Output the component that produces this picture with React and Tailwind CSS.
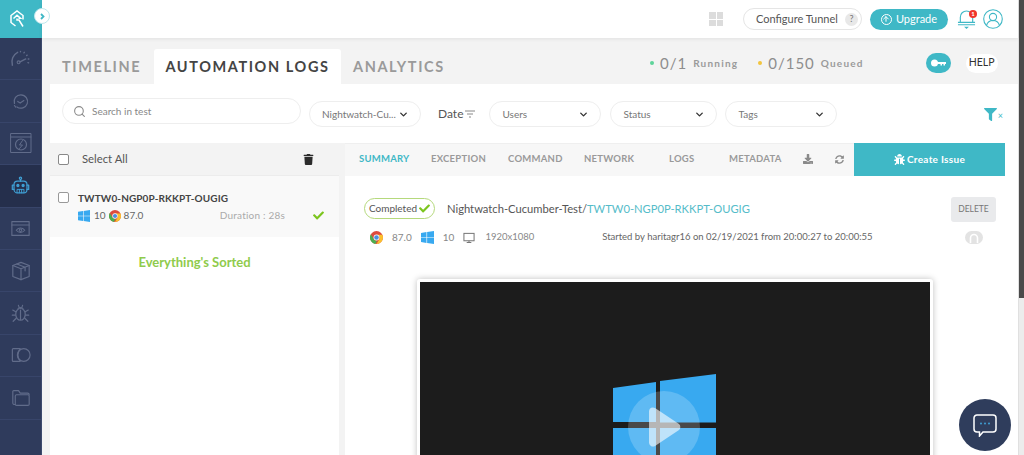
import React from "react";
import { Search, ChevronDown, ArrowUp } from "lucide-react";
import { FaTrash, FaCheck, FaDownload, FaSyncAlt, FaBug, FaFilter } from "react-icons/fa";

function Win({ size = 14, className = "" }) {
  return (
    <svg width={size} height={size} viewBox="0 0 14 14" className={className}>
      <path fill="#38a9f0" d="M0 2.1 5.9 1.2V6.6H0ZM6.6 1.1 14 0V6.6H6.6ZM0 7.4H5.9V12.8L0 11.9ZM6.6 7.4H14V14L6.6 12.9Z" />
    </svg>
  );
}

function Chrome({ size = 14, className = "" }) {
  return (
    <svg width={size} height={size} viewBox="0 0 24 24" className={className}>
      <circle cx="12" cy="12" r="12" fill="#dd4b3e" />
      <path fill="#fbc02d" d="M12 7h10.9A12 12 0 0 1 12 24l5.2-9A6 6 0 0 0 12 7Z" />
      <path fill="#4caf50" d="M1.6 6 7 15a6 6 0 0 0 6 2.9L9.8 23.8A12 12 0 0 1 1.6 6Z" />
      <circle cx="12" cy="12" r="5.4" fill="#fff" />
      <circle cx="12" cy="12" r="4.2" fill="#4a8fe0" />
    </svg>
  );
}

const stroke = "#616c8a";

function NavIcon({ children, color = stroke, size = 22 }) {
  return (
    <svg width={size} height={size} viewBox="0 0 22 22" fill="none" stroke={color} strokeWidth="1.2" strokeLinecap="round" strokeLinejoin="round">
      {children}
    </svg>
  );
}

const navIcons = [
  <NavIcon key="a" size={21}>
    <path d="M2.5 18C1 13 3 7 8 4.5" strokeWidth="1.5" />
    <path d="M11 3.5v.5M15 4.5l-.4.6M18 7.5l-.6.4M19.8 11.5h-.7M19.5 15.5l-.7-.2" strokeWidth="1.4" />
    <circle cx="9" cy="15" r="1.5" />
    <path d="M10.5 14.5 16.5 11.5" strokeWidth="1.5" />
  </NavIcon>,
  <NavIcon key="b" size={18}>
    <path d="M3 14A8.2 8.2 0 1 1 6 18.2" strokeWidth="1.5" />
    <path d="M3 16.5 4.5 18.5M7 11.5 10 13.5 14.5 10.5" strokeWidth="1.4" />
  </NavIcon>,
  <NavIcon key="c" size={22}>
    <rect x="1" y="1.5" width="20" height="19" strokeWidth="1" />
    <path d="M1 5h20" strokeWidth="1" />
    <circle cx="11" cy="12.5" r="5.5" strokeWidth="1.2" />
    <path d="M12.5 8.5 9.5 13h3L9.5 16.5" strokeWidth="1" />
  </NavIcon>,
  <NavIcon key="d" color="#3f9fd4" size={19}>
    <circle cx="11" cy="2.5" r="1.3" strokeWidth="1.4" />
    <path d="M11 4v2" strokeWidth="1.4" />
    <rect x="3.5" y="6" width="15" height="13.5" rx="4" strokeWidth="1.4" />
    <path d="M3.5 10.5H1.5v5h2M18.5 10.5h2v5h-2" strokeWidth="1.4" />
    <circle cx="8" cy="11" r="1.3" fill="#3f9fd4" />
    <circle cx="14" cy="11" r="1.3" fill="#3f9fd4" />
    <path d="M7 19.5v-4h8v4M9.7 15.5v4M12.3 15.5v4" strokeWidth="1.1" />
  </NavIcon>,
  <NavIcon key="e" size={19}>
    <rect x="1" y="3" width="20" height="16" strokeWidth="1.3" />
    <path d="M1 7h20" strokeWidth="1.3" />
    <path d="M6 13c3-3.5 7-3.5 10 0-3 3.5-7 3.5-10 0Z" />
    <circle cx="11" cy="13" r="1.5" />
  </NavIcon>,
  <NavIcon key="f" size={20}>
    <path d="M11 1.5 20 5v12l-9 3.5L2 17V5Z" strokeWidth="1.3" />
    <path d="M2 5l9 3.5L20 5M11 8.5v12M6.5 3.3l9 3.5v4" strokeWidth="1.3" />
  </NavIcon>,
  <NavIcon key="g" size={19}>
    <path d="M8.5 1.5 9.5 4M13.5 1.5 12.5 4" />
    <path d="M8 5.5c1-2 5-2 6 0" />
    <ellipse cx="11" cy="12" rx="5.5" ry="6.8" strokeWidth="1.4" />
    <path d="M11 7v11M5.5 9 2 7M16.5 9 20 7M5 13H1.5M17 13h3.5M6 16.5 2.5 20M16 16.5 19.5 20" strokeWidth="1.4" />
  </NavIcon>,
  <NavIcon key="h" size={20}>
    <path d="M10 4H2.5A1 1 0 0 0 1.5 5v12a1 1 0 0 0 1 1H10" strokeWidth="1.3" />
    <circle cx="14" cy="11" r="7" strokeWidth="1.3" />
    <path d="M10 4.5c-3 4-3 9 0 13" strokeWidth="1.3" />
  </NavIcon>,
  <NavIcon key="i" size={18}>
    <path d="M4 19H3a2 2 0 0 1-2-2V3a1 1 0 0 1 1-1h6l2 3h9a2 2 0 0 1 2 2" strokeWidth="1.4" />
    <rect x="4" y="7" width="17" height="13" rx="1.5" strokeWidth="1.4" />
  </NavIcon>,
];

function Sidebar() {
  return (
    <aside className="w-[42px] shrink-0 flex flex-col bg-[#2f3b5c] border-r border-[#3d4a6e]">
      <div className="h-[38px] bg-[#3fb8c6] flex items-center justify-center -mr-px">
        <svg width="14" height="18" viewBox="0 0 14 18" fill="none" stroke="#fff" strokeWidth="1.5" strokeLinejoin="miter" className="mr-[8px]">
          <path d="M5.5 16 1 12.5V5.5L7 1l6 4.5V9.5" />
          <path d="M3.5 8.5 7 5.2 10.5 8.2H8.5" />
          <path d="M7 8.5V10H9L13 16.5" />
        </svg>
      </div>
      {navIcons.map((icon, i) => (
        <div key={i} className={`h-[42.4px] flex items-center justify-center border-b border-[#38456a] ${i === 3 ? "bg-[#252f4c]" : ""}`}>
          {icon}
        </div>
      ))}
    </aside>
  );
}

function Header() {
  return (
    <header className="h-[38px] shrink-0 bg-white shadow-[0_1px_4px_rgba(0,0,0,0.08)] relative z-10 flex items-center justify-end pr-[15px]">
      <div className="grid grid-cols-2 gap-[1px] w-[14px] h-[14px] mr-[20px]">
        <span className="bg-[#dcdcdc]" />
        <span className="bg-[#dcdcdc]" />
        <span className="bg-[#dcdcdc]" />
        <span className="bg-[#dcdcdc]" />
      </div>
      <div className="h-[22px] w-[119px] rounded-full border border-[#e5e5e5] flex items-center pl-[12px] text-[11px] text-[#555] mr-[8px] whitespace-nowrap">
        <span>Configure Tunnel</span>
        <span className="ml-[7px] w-[13px] h-[13px] rounded-full bg-[#e8e8e8] text-[9px] text-[#777] flex items-center justify-center">?</span>
      </div>
      <div className="h-[21px] w-[78px] rounded-full bg-[#3fb8c6] flex items-center justify-center text-[11px] text-white mr-[9px]">
        <span className="w-[11px] h-[11px] rounded-full border border-white flex items-center justify-center mr-[4px]">
          <ArrowUp size={8} strokeWidth={3} />
        </span>
        Upgrade
      </div>
      <div className="relative w-[19px] h-[21px] mr-[7px]">
        <svg width="19" height="21" viewBox="0 0 20 21" fill="none" stroke="#3fb8c6" strokeWidth="1.2">
          <path d="M3.5 13V8a6.5 6.5 0 0 1 13 0v5" />
          <path d="M1 13.5h18M1 16h18" />
          <path d="M7.5 18h5L10 20.5Z" fill="#3fb8c6" stroke="none" />
        </svg>
        <span className="absolute right-[-1px] top-[1px] w-[8px] h-[8px] rounded-full bg-[#f0352b] text-white text-[6px] leading-[8px] text-center font-bold">1</span>
      </div>
      <svg width="20" height="20" viewBox="0 0 20 20" fill="none" stroke="#3fb8c6" strokeWidth="1.1">
        <circle cx="10" cy="10" r="9.3" />
        <circle cx="10" cy="8" r="3.6" />
        <path d="M3.5 16.5c1-3.5 3.5-5 6.5-5s5.5 1.5 6.5 5" />
      </svg>
    </header>
  );
}

function Stat({ dot, value, label, className = "" }) {
  return (
    <div className={`flex items-center mb-[7px] ${className}`}>
      <span className={`w-[4px] h-[4px] rounded-full ${dot} mr-[6px]`} />
      <span className="text-[15px] tracking-[1px] text-[#8d8d8d] mr-[6px]">{value}</span>
      <span className="text-[10px] font-bold tracking-[1.2px] text-[#9a9a9a] mt-[1px]">{label}</span>
    </div>
  );
}

function TabsRow() {
  return (
    <div className="h-[46px] shrink-0 flex items-end text-[14.5px] font-bold tracking-[1.6px]">
      <div className="w-[104px] h-[35px] flex items-center pl-[12px] text-[#9a9a9a]">TIMELINE</div>
      <div className="w-[187px] h-[35px] bg-white rounded-t-[3px] flex items-center justify-center text-[#444]">AUTOMATION LOGS</div>
      <div className="h-[35px] flex items-center pl-[12px] w-[309px] text-[#9a9a9a]">ANALYTICS</div>
      <div className="h-[35px] flex items-center font-normal tracking-normal">
        <Stat dot="bg-[#5ed49a]" value="0/1" label="Running" />
        <Stat dot="bg-[#f2c53d]" value="0/150" label="Queued" className="ml-[20px]" />
        <span className="ml-[62px] w-[25px] h-[20px] rounded-full bg-[#3fb8c6] flex items-center justify-center mb-[7px]">
          <svg width="15" height="8" viewBox="0 0 15 8" fill="#fff">
            <circle cx="3.5" cy="4" r="3.5" />
            <path d="M6 3h9v2h-1v1.5h-1.5V5H11v1.5H9.5V5H6Z" />
          </svg>
        </span>
        <span className="ml-[15px] w-[32px] h-[19px] rounded-full bg-white flex items-center justify-center text-[10.5px] text-[#333] mb-[7px]">HELP</span>
      </div>
    </div>
  );
}

function Select({ label, w, className = "" }) {
  return (
    <div className={`h-[26px] rounded-full border border-[#eeeeee] flex items-center justify-between pl-[12px] pr-[11px] text-[10px] text-[#777] whitespace-nowrap ${className}`} style={{ width: w }}>
      <span>{label}</span>
      <ChevronDown size={11} strokeWidth={3} color="#333" />
    </div>
  );
}

function FilterRow() {
  return (
    <div className="h-[59px] shrink-0 bg-white flex items-start pl-[12px] pr-[15px]">
      <div className="mt-[14px] w-[239px] h-[26px] rounded-full border border-[#eeeeee] flex items-center pl-[10px] text-[10px] text-[#888]">
        <Search size={13} color="#8a8a8a" className="mr-[6px]" />
        <span className="mt-[1px]">Search in test</span>
      </div>
      <Select label="Nightwatch-Cu..." w={112} className="mt-[17px] ml-[8px]" />
      <div className="mt-[17px] ml-[17px] h-[26px] flex items-center text-[12px] text-[#555]">
        Date
        <svg width="10" height="8" viewBox="0 0 10 8" stroke="#888" strokeWidth="1" className="ml-[2px]">
          <path d="M0 1h10M2 4h6M4 7h2" />
        </svg>
      </div>
      <Select label="Users" w={112} className="mt-[17px] ml-[14px]" />
      <Select label="Status" w={107} className="mt-[17px] ml-[9px]" />
      <Select label="Tags" w={112} className="mt-[17px] ml-[8px]" />
      <div className="ml-auto mt-[22px] flex items-center">
        <FaFilter size={13} color="#3fb8c6" />
        <span className="text-[9px] text-[#3fb8c6] ml-[1px] mt-[3px]">×</span>
      </div>
    </div>
  );
}

function ListColumn() {
  return (
    <div className="w-[289px] shrink-0 flex flex-col bg-white">
      <div className="h-[33px] shrink-0 bg-[#f3f3f3] border-b border-[#ececec] flex items-center pl-[8px] pr-[25px] text-[11.3px] text-[#555]">
        <span className="w-[11px] h-[11px] rounded-[2px] border border-[#888] bg-white mr-[13px]" />
        <span>Select All</span>
        <FaTrash size={11} color="#2b2b2b" className="ml-auto" />
      </div>
      <div className="h-[61px] shrink-0 bg-[#f9f9f9] flex pl-[8px] pr-[15px] pt-[15px]">
        <span className="w-[11px] h-[11px] rounded-[2px] border border-[#999] bg-white mr-[9px] mt-[1px]" />
        <div className="flex-1">
          <div className="text-[10px] font-bold tracking-[0.1px] text-[#444] leading-[14px]">TWTW0-NGP0P-RKKPT-OUGIG</div>
          <div className="flex items-center text-[10px] text-[#666] mt-[3px]">
            <Win size={12} />
            <span className="ml-[4px]">10</span>
            <Chrome size={12} className="ml-[3px]" />
            <span className="ml-[3px]">87.0</span>
            <span className="ml-auto text-[#aaa] tracking-[0.2px]">Duration : 28s</span>
            <FaCheck size={11} color="#7cc51e" className="ml-[28px]" />
          </div>
        </div>
      </div>
      <div className="pt-[16px] text-center text-[13px] font-bold text-[#8fcb4c]">Everything's Sorted</div>
    </div>
  );
}

function DetailTabs() {
  const tabs = [
    ["SUMMARY", 72, "text-[#3fb8c6]"],
    ["EXCEPTION", 77, ""],
    ["COMMAND", 76, ""],
    ["NETWORK", 85, ""],
    ["LOGS", 60, ""],
    ["METADATA", 74, ""],
  ];
  return (
    <div className="h-[33px] shrink-0 flex pr-[13px]">
      <div className="flex-1 bg-[#f7f7f7] border-t border-[#efefef] flex items-center pl-[14px] pb-[2px] text-[9.5px] font-bold tracking-[0.25px] text-[#9a9a9a]">
        {tabs.map(([t, w, c]) => (
          <span key={t} className={c} style={{ width: w }}>{t}</span>
        ))}
        <FaDownload size={10} color="#8a8a8a" />
        <FaSyncAlt size={9} color="#8a8a8a" className="ml-[22px]" />
      </div>
      <div className="w-[151px] bg-[#3fb8c6] flex items-center justify-center text-white text-[10px] font-bold tracking-[0.3px]">
        <FaBug size={11} className="mr-[2px]" />
        Create Issue
      </div>
    </div>
  );
}

function DetailPanel() {
  return (
    <div className="w-[673px] shrink-0 bg-white flex flex-col ml-[6px] overflow-hidden">
      <DetailTabs />
      <div className="flex items-start pl-[19px] pr-[22px] pt-[22px]">
        <div className="h-[21px] w-[71px] rounded-full border border-[#b5d97c] flex items-center justify-center text-[10px] text-[#555]">
          Completed
          <FaCheck size={11} color="#7cc51e" className="ml-[2px]" />
        </div>
        <div className="ml-[12px] text-[11.2px] h-[21px] mt-[1px] flex items-center text-[#555]">
          Nightwatch-Cucumber-Test/<span className="text-[#55bcc9]">TWTW0-NGP0P-RKKPT-OUGIG</span>
        </div>
        <div className="ml-auto -mt-[1px] w-[45px] h-[25px] rounded-[3px] bg-[#e9eaec] flex items-center justify-center text-[8.5px] text-[#777]">DELETE</div>
      </div>
      <div className="flex items-center pl-[25px] pr-[35px] mt-[8px] h-[16px] text-[10px] text-[#888]">
        <Chrome size={13} />
        <span className="ml-[9px]">87.0</span>
        <Win size={13} className="ml-[9px]" />
        <span className="ml-[9px]">10</span>
        <svg width="12" height="12" viewBox="0 0 13 12" fill="none" stroke="#777" strokeWidth="1.1" className="ml-[9px]">
          <rect x="1" y="1" width="11" height="8" />
          <path d="M4 11h5M6.5 9v2" />
        </svg>
        <span className="ml-[10px] text-[9.5px]">1920x1080</span>
        <span className="ml-[68px] text-[9.5px] text-[#666]">Started by haritagr16 on 02/19/2021 from 20:00:27 to 20:00:55</span>
        <span className="ml-auto w-[18px] h-[13px] rounded-full bg-[#e3e3e3] flex items-center justify-center">
          <svg width="10" height="10" viewBox="0 0 10 10" fill="none" stroke="#fff" strokeWidth="1.6"><path d="M1.5 10V5a3.5 3.5 0 0 1 7 0V10" /></svg>
        </span>
      </div>
      <div className="ml-[72px] mt-[34px] w-[516px] h-[300px] shrink-0 bg-white rounded-[3px] p-[3px] shadow-[0_0_6px_rgba(0,0,0,0.25)]">
        <div className="h-full bg-[#1c1c1c] pl-[193px] pt-[92px]">
          <svg width="103" height="100" viewBox="0 0 103 100">
            <path fill="#38a9f0" d="M0 14 43 8V48H0ZM47 7 103 0V48.5H47ZM0 54H43V100H0ZM47 54H103V100H47Z" />
            <circle cx="51" cy="53" r="36" fill="#fff" fillOpacity="0.2" />
            <path d="M36 37a4 4 0 0 1 6-3L66 50a4 4 0 0 1 0 6L42 72a4 4 0 0 1-6-3Z" fill="#fff" fillOpacity="0.6" />
          </svg>
        </div>
      </div>
    </div>
  );
}

export default function App() {
  return (
    <div className="relative w-[1024px] h-[455px] overflow-hidden flex bg-[#f3f3f3] font-['Lato',sans-serif]">
      <Sidebar />
      <div className="flex-1 min-w-0 flex flex-col">
        <Header />
        <div className="flex-1 min-h-0 pl-[8px] flex flex-col">
          <TabsRow />
          <FilterRow />
          <div className="flex-1 min-h-0 flex">
            <ListColumn />
            <DetailPanel />
          </div>
        </div>
      </div>
      <div className="w-[6px] shrink-0 bg-[#ececec] border-l border-[#e0e0e0]">
        <div className="h-[298px] bg-[#4a4a4a]" />
      </div>
      <span className="absolute left-[34px] top-[8px] z-20 w-[16px] h-[16px] rounded-full bg-white border border-[#bfe8ed] flex items-center justify-center">
        <svg width="7" height="7" viewBox="0 0 7 7" fill="none" stroke="#3fb8c6" strokeWidth="1.8"><path d="M2 1l2.5 2.5L2 6" /></svg>
      </span>
      <div className="absolute left-[959px] top-[399px] z-20 w-[52px] h-[52px] rounded-full bg-[#2f3d5c] flex items-center justify-center">
        <svg width="24" height="23" viewBox="0 0 24 23" fill="none">
          <path d="M4 1h16a3 3 0 0 1 3 3v11a3 3 0 0 1-3 3H10l-3.5 4v-4H4a3 3 0 0 1-3-3V4a3 3 0 0 1 3-3Z" stroke="#fff" strokeWidth="1.5" />
          <circle cx="8" cy="9.5" r="1" fill="#3f9fd4" />
          <circle cx="12" cy="9.5" r="1" fill="#3f9fd4" />
          <circle cx="16" cy="9.5" r="1" fill="#3f9fd4" />
        </svg>
      </div>
    </div>
  );
}
